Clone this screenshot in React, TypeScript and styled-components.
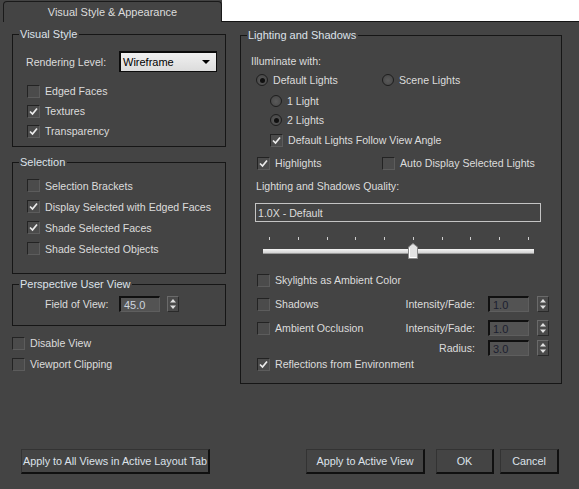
import React from "react";
import styled, { createGlobalStyle } from "styled-components";

const GlobalStyle = createGlobalStyle`
  html, body {
    margin: 0;
    padding: 0;
    background: #444444;
  }
  body {
    font-family: "Liberation Sans", Arial, sans-serif;
    font-size: 10.6px;
    color: #dcdcdc;
  }
`;

const Window = styled.div`
  width: 579px;
  height: 489px;
  background: #444444;
  display: flex;
  flex-direction: column;
  overflow: hidden;
`;

const TabStrip = styled.div`
  display: flex;
  height: 22px;
  flex-shrink: 0;
`;

const TabGap = styled.div`
  width: 3px;
  background: #444444;
`;

const Tab = styled.div`
  width: 219px;
  height: 21px;
  margin-top: 1px;
  box-sizing: border-box;
  border: 1px solid #1a1a1a;
  border-bottom: none;
  border-radius: 4px 4px 0 0;
  background: #444444;
  display: flex;
  align-items: center;
  justify-content: center;
  color: #dcdcdc;
  font-size: 11px;
  padding-bottom: 1px;
`;

const TabFill = styled.div`
  flex: 1;
  background: #ffffff;
  border-bottom: 1px solid #141414;
  height: 21px;
`;

const Body = styled.div`
  display: flex;
  gap: 14px;
  padding-left: 12px;
`;

const Column = styled.div<{ $w: number }>`
  width: ${(p) => p.$w}px;
  display: flex;
  flex-direction: column;
`;

const Group = styled.fieldset<{ $mt: number; $pb: number }>`
  margin: ${(p) => p.$mt}px 0 0 0;
  padding: 0 0 ${(p) => p.$pb}px 0;
  border: 1px solid #161616;
  min-width: 0;
  display: flex;
  flex-direction: column;
`;

const Legend = styled.legend`
  margin-left: 6px;
  padding: 0 2px 0 1px;
  line-height: 14px;
  height: 14px;
  font-size: 11px;
  color: #dde2ea;
`;

const Line = styled.div<{ $mt?: number; $h?: number; $pl?: number; $pr?: number }>`
  display: flex;
  align-items: center;
  margin-top: ${(p) => p.$mt ?? 0}px;
  height: ${(p) => p.$h ?? 18}px;
  padding-left: ${(p) => p.$pl ?? 0}px;
  padding-right: ${(p) => p.$pr ?? 0}px;
  white-space: nowrap;
`;

const Item = styled.div<{ $w?: number }>`
  display: flex;
  align-items: center;
  gap: 5px;
  width: ${(p) => (p.$w ? `${p.$w}px` : "auto")};
  flex: ${(p) => (p.$w ? "none" : "1")};
`;

const Label = styled.span<{ $w?: number }>`
  display: inline-block;
  width: ${(p) => (p.$w ? `${p.$w}px` : "auto")};
`;

const Box = styled.span`
  width: 13px;
  height: 13px;
  box-sizing: border-box;
  border: 1px solid #232323;
  border-right-color: #5c5c5c;
  border-bottom-color: #5c5c5c;
  background: #4b4b4b;
  display: flex;
  align-items: center;
  justify-content: center;
  flex-shrink: 0;
`;

const Radio = styled.span<{ $on?: boolean }>`
  width: 12px;
  height: 12px;
  box-sizing: border-box;
  border-radius: 50%;
  border: 1px solid #1e1e1e;
  background: radial-gradient(circle at 50% 55%, #5a5a5a 0%, #4a4a4a 70%, #3a3a3a 100%);
  display: flex;
  align-items: center;
  justify-content: center;
  flex-shrink: 0;
  &::after {
    content: "";
    display: ${(p) => (p.$on ? "block" : "none")};
    width: 5px;
    height: 5px;
    border-radius: 50%;
    background: #101010;
  }
`;

const Dropdown = styled.div`
  width: 98px;
  height: 21px;
  box-sizing: border-box;
  border: 2px solid #0c0c0c;
  border-right-width: 1px;
  border-bottom-width: 1px;
  background: linear-gradient(#f0f0f0, #dcdcdc);
  color: #000;
  display: flex;
  align-items: center;
  justify-content: space-between;
  padding: 0 6px 0 2px;
  font-size: 11px;
`;

const Caret = styled.span`
  width: 0;
  height: 0;
  border-left: 4px solid transparent;
  border-right: 4px solid transparent;
  border-top: 4px solid #000;
`;

const NumField = styled.div<{ $dim?: boolean; $ml?: number }>`
  width: 41px;
  height: 16px;
  margin-left: ${(p) => p.$ml ?? 0}px;
  box-sizing: border-box;
  border-top: 2px solid #101010;
  border-left: 2px solid #101010;
  border-right: 1px solid #5e5e5e;
  border-bottom: 1px solid #5e5e5e;
  background: #535353;
  color: ${(p) => (p.$dim ? "#1c2030" : "#cdd4de")};
  display: flex;
  align-items: center;
  padding-left: 3px;
  font-size: 11px;
`;

const Spin = styled.div<{ $ml: number }>`
  width: 12px;
  height: 16px;
  margin-left: ${(p) => p.$ml}px;
  box-sizing: border-box;
  border: 1px solid #2a2a2a;
  border-top-color: #6a6a6a;
  border-left-color: #6a6a6a;
  background: #4a4a4a;
  display: flex;
  align-items: center;
  justify-content: center;
`;

const QualityBox = styled.div`
  margin: 8px 0 0 14px;
  width: 286px;
  height: 19px;
  box-sizing: border-box;
  border: 1px solid #c4c4c4;
  display: flex;
  align-items: center;
  padding-left: 2px;
  color: #dcdcdc;
`;

const Slider = styled.div`
  margin: 12px 0 0 22px;
  width: 271px;
  height: 26px;
  display: flex;
  flex-direction: column;
`;

const Ticks = styled.div`
  display: flex;
  justify-content: space-between;
  padding: 0 5px 0 6px;
  margin-top: 3px;
  height: 3px;
`;

const Tick = styled.span`
  width: 1px;
  height: 3px;
  background: #cfcfcf;
`;

const Track = styled.div`
  position: relative;
  margin-top: 9px;
  height: 4px;
  background: linear-gradient(#f4f4f4, #d2d2d2);
  border-bottom: 1px solid #9a9a9a;
`;

const Thumb = styled.svg`
  position: absolute;
  top: -6px;
  width: 10px;
  height: 16px;
`;

const ButtonBar = styled.div`
  margin-top: auto;
  margin-bottom: 15px;
  display: flex;
  align-items: center;
  padding: 0 20px 0 21px;
`;

const Button = styled.div<{ $w: number; $ml?: number }>`
  width: ${(p) => p.$w}px;
  margin-left: ${(p) => p.$ml ?? 0}px;
  height: 25px;
  box-sizing: border-box;
  border: 1px solid #333333;
  border-right: 2px solid #101010;
  border-bottom: 2px solid #101010;
  background: #444444;
  display: flex;
  align-items: center;
  justify-content: center;
  color: #dde2ea;
  font-size: 10.8px;
  white-space: nowrap;
  overflow: hidden;
`;

const Check = ({ on }: { on?: boolean }) => (
  <Box>
    {on && (
      <svg width="9" height="9" viewBox="0 0 9 9">
        <path d="M1 4.5 L3.5 7 L8 1.5" stroke="#ececec" strokeWidth="1.7" fill="none" />
      </svg>
    )}
  </Box>
);

const Spinner = ({ ml }: { ml: number }) => (
  <Spin $ml={ml}>
    <svg width="8" height="12" viewBox="0 0 8 12">
      <path d="M4 1 L7 4.5 L1 4.5 Z" fill="#e0e0e0" />
      <path d="M1 7.5 L7 7.5 L4 11 Z" fill="#e0e0e0" />
    </svg>
  </Spin>
);

const CheckRow = ({ on, text }: { on?: boolean; text: string }) => (
  <Item>
    <Check on={on} />
    <span>{text}</span>
  </Item>
);

const tickCount = 10;
const sliderPos = 5;

export default function App() {
  const thumbLeft = 6 + (sliderPos / (tickCount - 1)) * 259 - 5;
  return (
    <Window>
      <GlobalStyle />
      <TabStrip>
        <TabGap />
        <Tab>Visual Style &amp; Appearance</Tab>
        <TabFill />
      </TabStrip>
      <Body>
        <Column $w={214}>
          <Group $mt={5} $pb={5}>
            <Legend>Visual Style</Legend>
            <Line $mt={10} $h={21} $pl={13}>
              <Label $w={93}>Rendering Level:</Label>
              <Dropdown>
                <span>Wireframe</span>
                <Caret />
              </Dropdown>
            </Line>
            <Line $mt={9} $h={20} $pl={14}>
              <CheckRow text="Edged Faces" />
            </Line>
            <Line $h={20} $pl={14}>
              <CheckRow on text="Textures" />
            </Line>
            <Line $h={20} $pl={14}>
              <CheckRow on text="Transparency" />
            </Line>
          </Group>

          <Group $mt={8} $pb={14}>
            <Legend>Selection</Legend>
            <Line $mt={6} $h={21} $pl={14}>
              <CheckRow text="Selection Brackets" />
            </Line>
            <Line $h={21} $pl={14}>
              <CheckRow on text="Display Selected with Edged Faces" />
            </Line>
            <Line $h={21} $pl={14}>
              <CheckRow on text="Shade Selected Faces" />
            </Line>
            <Line $h={21} $pl={14}>
              <CheckRow text="Shade Selected Objects" />
            </Line>
          </Group>

          <Group $mt={3} $pb={12}>
            <Legend>Perspective User View</Legend>
            <Line $mt={4} $h={18} $pl={32}>
              <Label $w={74}>Field of View:</Label>
              <NumField>45.0</NumField>
              <Spinner ml={7} />
            </Line>
          </Group>

          <Line $mt={7} $h={20}>
            <CheckRow text="Disable View" />
          </Line>
          <Line $mt={1} $h={20}>
            <CheckRow text="Viewport Clipping" />
          </Line>
        </Column>

        <Column $w={322}>
          <Group $mt={6} $pb={11}>
            <Legend>Lighting and Shadows</Legend>
            <Line $mt={10} $pl={10}>
              <Label>Illuminate with:</Label>
            </Line>
            <Line $mt={1} $pl={15}>
              <Item $w={126}>
                <Radio $on />
                <span>Default Lights</span>
              </Item>
              <Item>
                <Radio />
                <span>Scene Lights</span>
              </Item>
            </Line>
            <Line $mt={3} $pl={29}>
              <Item>
                <Radio />
                <span>1 Light</span>
              </Item>
            </Line>
            <Line $mt={1} $pl={29}>
              <Item>
                <Radio $on />
                <span>2 Lights</span>
              </Item>
            </Line>
            <Line $mt={2} $pl={29}>
              <CheckRow on text="Default Lights Follow View Angle" />
            </Line>
            <Line $mt={5} $pl={16}>
              <Item $w={125}>
                <Check on />
                <span>Highlights</span>
              </Item>
              <CheckRow text="Auto Display Selected Lights" />
            </Line>
            <Line $mt={5} $pl={15}>
              <Label>Lighting and Shadows Quality:</Label>
            </Line>
            <QualityBox>1.0X - Default</QualityBox>
            <Slider>
              <Ticks>
                {Array.from({ length: tickCount }).map((_, i) => (
                  <Tick key={i} />
                ))}
              </Ticks>
              <Track>
                <Thumb style={{ left: thumbLeft }} viewBox="0 0 10 16">
                  <path d="M0.5 15.5 L0.5 4 L5 0.5 L9.5 4 L9.5 15.5 Z" fill="#e2e2e2" stroke="#8a8a8a" />
                  <path d="M1.5 5 L1.5 14.5 L8.5 14.5" stroke="#ffffff" fill="none" />
                </Thumb>
              </Track>
            </Slider>
            <Line $mt={11} $pl={16}>
              <CheckRow text="Skylights as Ambient Color" />
            </Line>
            <Line $mt={6} $pl={16} $pr={12}>
              <CheckRow text="Shadows" />
              <Label>Intensity/Fade:</Label>
              <NumField $dim $ml={13}>1.0</NumField>
              <Spinner ml={8} />
            </Line>
            <Line $mt={6} $pl={16} $pr={12}>
              <CheckRow text="Ambient Occlusion" />
              <Label>Intensity/Fade:</Label>
              <NumField $dim $ml={13}>1.0</NumField>
              <Spinner ml={8} />
            </Line>
            <Line $mt={3} $h={16} $pl={16} $pr={12}>
              <Item />
              <Label>Radius:</Label>
              <NumField $dim $ml={13}>3.0</NumField>
              <Spinner ml={8} />
            </Line>
            <Line $h={16} $pl={16}>
              <CheckRow on text="Reflections from Environment" />
            </Line>
          </Group>
        </Column>
      </Body>

      <ButtonBar>
        <Button $w={189}>Apply to All Views in Active Layout Tab</Button>
        <Button $w={119} $ml={96}>Apply to Active View</Button>
        <Button $w={58} $ml={11}>OK</Button>
        <Button $w={59} $ml={6}>Cancel</Button>
      </ButtonBar>
    </Window>
  );
}
